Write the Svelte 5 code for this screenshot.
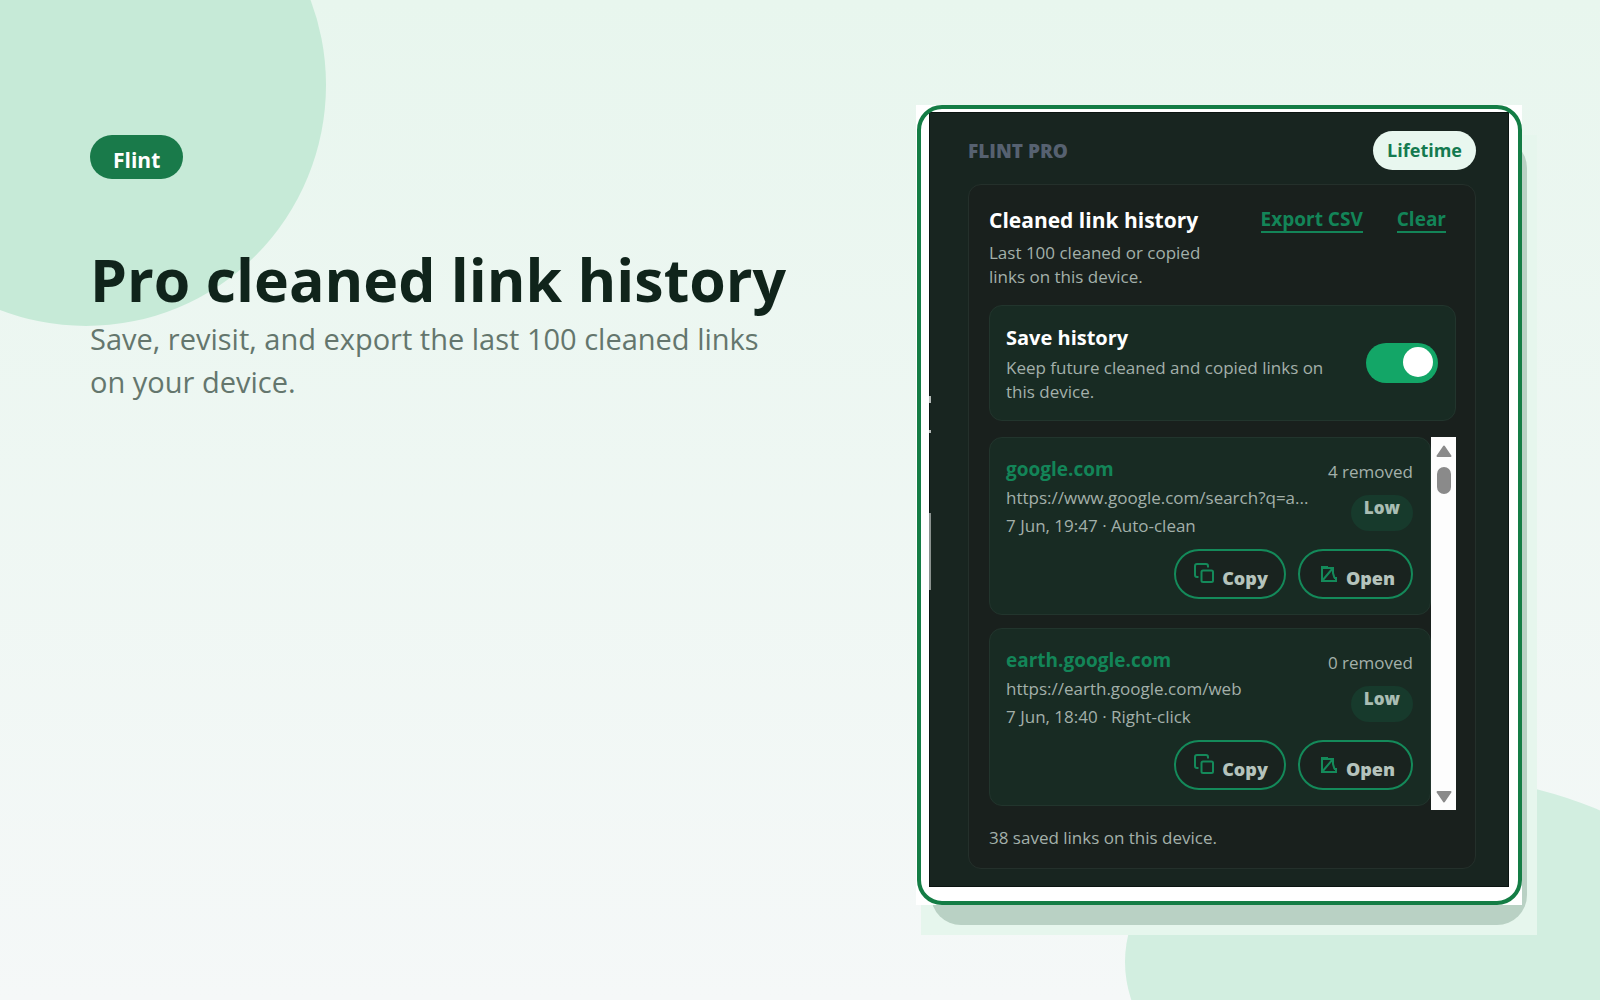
<script>
  let saveHistory = $state(true);

  const items = [
    {
      domain: 'google.com',
      url: 'https://www.google.com/search?q=a...',
      date: '7 Jun, 19:47 · Auto-clean',
      removed: '4 removed',
      risk: 'Low'
    },
    {
      domain: 'earth.google.com',
      url: 'https://earth.google.com/web',
      date: '7 Jun, 18:40 · Right-click',
      removed: '0 removed',
      risk: 'Low'
    }
  ];
</script>

<main class="page">
  <div class="blob blob-top"></div>
  <div class="blob blob-bottom"></div>

  <section class="intro">
    <span class="brand">Flint</span>
    <h1>Pro cleaned link history</h1>
    <p>Save, revisit, and export the last 100 cleaned links on your device.</p>
  </section>

  <div class="frame">
    <div class="halo"></div>
    <div class="shade"></div>
    <div class="mat">
      <div class="outline"></div>
      <section class="popup">
        <header class="popup-head">
          <span class="plan">FLINT PRO</span>
          <span class="lifetime">Lifetime</span>
        </header>

        <div class="card">
          <div class="card-head">
            <div class="card-title">
              <h2>Cleaned link history</h2>
              <p>Last 100 cleaned or copied links on this device.</p>
            </div>
            <nav class="actions">
              <a href="#export">Export CSV</a>
              <a href="#clear">Clear</a>
            </nav>
          </div>

          <div class="save">
            <label for="save-history">
              <strong>Save history</strong>
              <span>Keep future cleaned and copied links on this device.</span>
            </label>
            <input id="save-history" class="switch" type="checkbox" role="switch" bind:checked={saveHistory} />
          </div>

          <div class="list">
            <div class="items">
              {#each items as item}
                <article class="item">
                  <div class="row">
                    <div class="info">
                      <h3>{item.domain}</h3>
                      <p>{item.url}</p>
                      <p>{item.date}</p>
                    </div>
                    <div class="meta">
                      <span class="removed">{item.removed}</span>
                      <span class="risk">{item.risk}</span>
                    </div>
                  </div>
                  <div class="buttons">
                    <button type="button">
                      <svg class="icon" viewBox="0 0 20 20" aria-hidden="true">
                        <path d="M4.500 14H3a2 2 0 0 1-2-2V3a2 2 0 0 1 2-2h9a2 2 0 0 1 2 2v1.500" />
                        <rect x="7.500" y="7.500" width="11.500" height="11.500" rx="1.500" />
                      </svg>
                      <span>Copy</span>
                    </button>
                    <button type="button">
                      <svg class="icon" viewBox="0 0 20 20" aria-hidden="true">
                        <path d="M8 5H4v13h14v-3h-2M4 5V4h5v1h6v5l1.500 5M15 5L4 18" />
                      </svg>
                      <span>Open</span>
                    </button>
                  </div>
                </article>
              {/each}
            </div>
            <div class="scroll">
              <svg viewBox="0 0 16 12" aria-hidden="true"><path d="M8 1.500L14.500 11h-13z" /></svg>
              <div class="thumb"></div>
              <svg viewBox="0 0 16 12" aria-hidden="true"><path d="M8 10.500L1.500 1h13z" /></svg>
            </div>
          </div>

          <p class="count">38 saved links on this device.</p>
        </div>
      </section>
    </div>
  </div>
</main>

<style>
  :global(body) {
    margin: 0;
  }

  .page {
    position: relative;
    overflow: hidden;
    box-sizing: border-box;
    min-height: 100vh;
    padding: 105px 78px 95px 90px;
    display: flex;
    justify-content: space-between;
    align-items: flex-start;
    gap: 60px;
    background: linear-gradient(#e8f6ee, #f5f8f8);
    font-family: 'Open Sans', 'Noto Sans', sans-serif;
  }

  h1, h2, h3, p {
    margin: 0;
  }

  .blob {
    position: absolute;
    border-radius: 50%;
  }

  .blob-top {
    left: -154px;
    top: -156px;
    width: 480px;
    height: 482px;
    background: #c6ead7;
  }

  .blob-bottom {
    right: -126px;
    bottom: -148px;
    width: 601px;
    height: 372px;
    background: #d2eee0;
  }

  .intro {
    position: relative;
    flex: 0 1 700px;
    padding-top: 30px;
  }

  .brand {
    display: inline-block;
    box-sizing: border-box;
    height: 44px;
    padding: 8px 23px 0;
    border-radius: 22px;
    background: #197a4a;
    color: #fff;
    font-size: 21px;
    line-height: 34px;
    font-weight: 700;
  }

  h1 {
    margin-top: 63px;
    color: #10241b;
    font-size: 59px;
    line-height: 75px;
    font-weight: 700;
    white-space: nowrap;
  }

  .intro p {
    color: #64766d;
    font-size: 29px;
    line-height: 43px;
  }

  .frame {
    position: relative;
    flex: 0 1 606px;
  }

  .halo {
    position: absolute;
    inset: 30px -15px -30px 5px;
    background: #e6f6ed;
  }

  .shade {
    position: absolute;
    inset: 33px -5px -20px 15px;
    border-radius: 30px;
    background: #b9d1c4;
  }

  .mat {
    position: relative;
    padding: 7px 13px 18px;
    background: #fff;
  }

  .outline {
    position: absolute;
    z-index: 1;
    inset: 0 0 0 1px;
    border: 4px solid #147d45;
    border-radius: 25px;
    pointer-events: none;
  }

  .popup {
    position: relative;
    padding: 18px 32px 17px 38px;
    border: 1px solid #0b1411;
    background: #182520;
  }

  /* light slivers along the left edge of the popup */
  .popup::before {
    content: '';
    position: absolute;
    left: -1px;
    top: 0;
    width: 2px;
    height: 480px;
    background: linear-gradient(
      transparent 283px, #b4bab7 283px, #b4bab7 290px,
      transparent 290px, transparent 317px, #b4bab7 317px, #b4bab7 320px,
      transparent 320px, transparent 400px, #8b928f 400px, #8b928f 477px,
      transparent 477px
    );
  }

  .popup-head {
    display: flex;
    justify-content: space-between;
    align-items: center;
    margin-bottom: 14px;
  }

  .plan {
    color: #566170;
    font-size: 19px;
    line-height: 24px;
    font-weight: 800;
  }

  .lifetime {
    padding: 0 14px;
    border-radius: 20px;
    background: #e8f7ef;
    color: #147a50;
    font-size: 18px;
    line-height: 39px;
    font-weight: 700;
  }

  .card {
    padding: 20px 19px 18px 20px;
    border: 1px solid #24302b;
    border-radius: 13px;
    background: #19201d;
  }

  .card-head {
    display: flex;
    justify-content: space-between;
    align-items: flex-start;
    margin-bottom: 16px;
  }

  .card-title {
    flex: 0 0 230px;
  }

  h2 {
    margin-bottom: 5px;
    color: #fff;
    font-size: 21px;
    line-height: 31px;
    font-weight: 700;
    white-space: nowrap;
  }

  .card p, .save span, .removed {
    color: #a3b0aa;
    font-size: 17px;
    line-height: 24px;
  }

  .actions {
    display: flex;
    gap: 34px;
    padding: 2px 10px 0 0;
  }

  .actions a {
    color: #138558;
    border-bottom: 2px solid #138558;
    font-size: 19px;
    line-height: 24px;
    font-weight: 700;
    text-decoration: none;
    white-space: nowrap;
  }

  .save {
    display: flex;
    justify-content: space-between;
    align-items: center;
    padding: 16px 17px 16px 16px;
    margin-bottom: 16px;
    border: 1px solid #22352d;
    border-radius: 13px;
    background: #182b23;
  }

  .save label {
    display: flex;
    flex-direction: column;
    gap: 2px;
    flex: 0 1 325px;
  }

  .save strong {
    color: #fff;
    font-size: 20px;
    line-height: 32px;
    font-weight: 700;
  }

  .switch {
    appearance: none;
    box-sizing: border-box;
    width: 72px;
    height: 40px;
    margin: 0;
    padding: 4px 5px;
    border-radius: 20px;
    background: #53615a;
    display: flex;
  }

  .switch::before {
    content: '';
    width: 30px;
    height: 30px;
    border-radius: 50%;
    background: #fff;
  }

  .switch:checked {
    justify-content: flex-end;
    background: #13a667;
  }

  .list {
    display: flex;
    height: 373px;
    margin-bottom: 16px;
  }

  .items {
    flex: 1;
    min-width: 0;
    display: flex;
    flex-direction: column;
    gap: 13px;
  }

  .item {
    padding: 16px 17px 15px 16px;
    border: 1px solid #22352d;
    border-radius: 13px;
    background: #182b23;
  }

  .row {
    display: flex;
    justify-content: space-between;
    margin-bottom: 9px;
  }

  .info {
    min-width: 0;
  }

  h3 {
    color: #138558;
    font-size: 19px;
    line-height: 30px;
    font-weight: 700;
  }

  .info p {
    line-height: 28px;
    white-space: nowrap;
  }

  .meta {
    display: flex;
    flex-direction: column;
    align-items: flex-end;
    gap: 11px;
    padding-top: 6px;
  }

  .removed {
    white-space: nowrap;
  }

  .risk {
    box-sizing: border-box;
    height: 36px;
    padding: 0 13px;
    border-radius: 18px;
    background: #173a2c;
    color: #a9bdb3;
    font-size: 17px;
    line-height: 25px;
    font-weight: 800;
  }

  .buttons {
    display: flex;
    justify-content: flex-end;
    gap: 12px;
  }

  button {
    box-sizing: border-box;
    display: flex;
    align-items: flex-start;
    gap: 8px;
    height: 50px;
    padding: 12px 16px 0 18px;
    border: 2px solid #148a5a;
    border-radius: 25px;
    background: #19231f;
    color: #b5c3bc;
    font-family: inherit;
    font-size: 18px;
    line-height: 30px;
    font-weight: 800;
  }

  .icon {
    width: 20px;
    height: 20px;
    fill: none;
    stroke: #148a5a;
    stroke-width: 2;
  }

  .scroll {
    box-sizing: border-box;
    width: 25px;
    padding: 8px 0 7px;
    display: flex;
    flex-direction: column;
    align-items: center;
    background: #fdfdfd;
  }

  .scroll svg {
    width: 16px;
    height: 12px;
    fill: #8a8a8a;
    stroke: #8a8a8a;
    stroke-width: 2;
    stroke-linejoin: round;
  }

  .thumb {
    width: 14px;
    height: 27px;
    margin: 10px 0 auto;
    border-radius: 7px;
    background: #8a8a8a;
  }
</style>
